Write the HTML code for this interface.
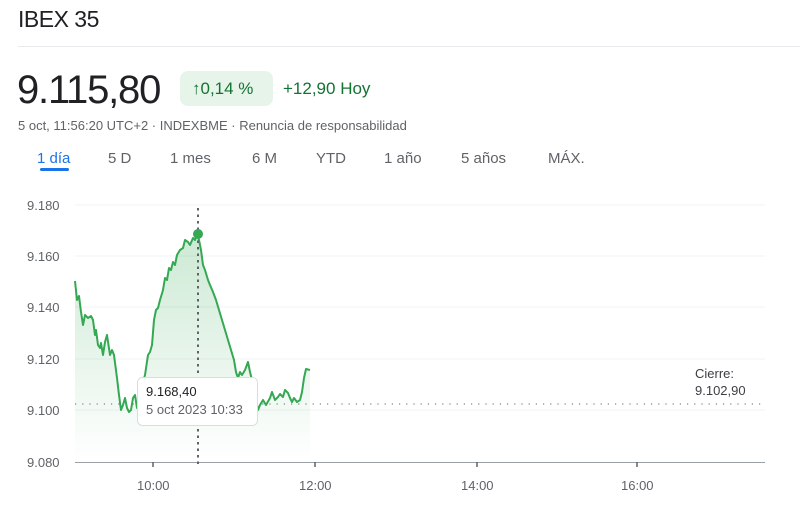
<!DOCTYPE html>
<html><head><meta charset="utf-8"><style>
*{margin:0;padding:0;box-sizing:border-box}
body{width:800px;height:509px;background:#fff;font-family:"Liberation Sans",Arial,sans-serif;position:relative;overflow:hidden;color:#202124}
.a{position:absolute;white-space:nowrap}
.tab{position:absolute;top:150px;font-size:15px;color:#5f6368}
</style></head><body>
<div class="a" style="left:18px;top:6px;font-size:23px;color:#202124;letter-spacing:-0.5px">IBEX 35</div>
<div class="a" style="left:18px;top:46px;width:782px;height:1px;background:#e8eaed"></div>
<div class="a" style="left:17px;top:68px;font-size:40px;color:#202124;letter-spacing:-1.2px">9.115,80</div>
<div class="a" style="left:180px;top:71px;width:93px;height:35px;background:#e6f4ea;border-radius:8px"></div>
<div class="a" style="left:192px;top:79px;font-size:17px;color:#137333">↑0,14 %</div>
<div class="a" style="left:283px;top:79px;font-size:17px;color:#137333">+12,90 Hoy</div>
<div class="a" style="left:18px;top:118px;font-size:13px;color:#5f6368">5 oct, 11:56:20 UTC+2 · INDEXBME · Renuncia de responsabilidad</div>
<div class="tab" style="left:37px;color:#1a73e8">1 día</div>
<div class="a" style="left:40px;top:168px;width:29px;height:3px;background:#1a73e8;border-radius:2px"></div>
<div class="tab" style="left:108px">5 D</div>
<div class="tab" style="left:170px">1 mes</div>
<div class="tab" style="left:252px">6 M</div>
<div class="tab" style="left:316px">YTD</div>
<div class="tab" style="left:384px">1 año</div>
<div class="tab" style="left:461px">5 años</div>
<div class="tab" style="left:548px">MÁX.</div>
<svg class="a" style="left:0;top:0" width="800" height="509" font-family="Liberation Sans, Arial, sans-serif">
<defs><linearGradient id="g" x1="0" y1="0" x2="0" y2="1"><stop offset="0" stop-color="#34a853" stop-opacity="0.25"/><stop offset="1" stop-color="#34a853" stop-opacity="0"/></linearGradient></defs>
<g stroke="#f1f3f4" stroke-width="1">
<line x1="75" y1="205" x2="765" y2="205"/><line x1="75" y1="256" x2="765" y2="256"/><line x1="75" y1="307" x2="765" y2="307"/><line x1="75" y1="359" x2="765" y2="359"/><line x1="75" y1="410" x2="765" y2="410"/></g>
<line x1="75" y1="462.5" x2="765" y2="462.5" stroke="#9aa0a6" stroke-width="1"/>
<g stroke="#5f6368" stroke-width="1.5"><line x1="153" y1="462" x2="153" y2="467"/><line x1="315" y1="462" x2="315" y2="467"/><line x1="477" y1="462" x2="477" y2="467"/><line x1="637" y1="462" x2="637" y2="467"/></g>
<g font-size="13" fill="#5f6368">
<text x="27" y="210">9.180</text><text x="27" y="261">9.160</text><text x="27" y="312">9.140</text><text x="27" y="364">9.120</text><text x="27" y="415">9.100</text><text x="27" y="467">9.080</text>
<text x="137" y="490">10:00</text><text x="299" y="490">12:00</text><text x="461" y="490">14:00</text><text x="621" y="490">16:00</text>
</g>
<line x1="75" y1="404" x2="765" y2="404" stroke="#80868b" stroke-width="1.2" stroke-dasharray="1.2 6"/>
<text x="695" y="378" font-size="13" fill="#3c4043">Cierre:</text><text x="695" y="395" font-size="13" fill="#3c4043">9.102,90</text>
<path d="M75,281 L77,300 79,296 81,312 83,325 85,315 88,318 91,316 93,320 95,335 96,330 98,345 100,348 101,343 103,355 105,342 107,335 110,355 112,350 114,355 117,378 119,395 121,410 123,405 125,398 127,408 129,412 131,410 133,398 135,395 137,408 140,405 142,385 145,375 148,355 150,352 152,345 154,320 156,310 158,308 160,300 163,290 165,278 167,280 169,268 171,270 173,262 175,265 177,255 180,250 183,248 185,240 188,242 190,245 193,238 195,240 197,234 199,240 201,250 203,265 205,270 208,280 210,285 213,292 216,300 219,310 222,320 225,330 228,340 231,350 234,360 236,372 238,378 240,372 242,375 245,370 248,362 250,372 252,380 255,395 258,410 260,405 263,400 266,405 270,398 272,392 275,400 278,397 280,394 283,397 285,390 288,393 290,398 292,402 294,398 297,402 300,400 302,392 304,378 306,369 310,370 L310,462 L75,462 Z" fill="url(#g)"/>
<path d="M75,281 L77,300 79,296 81,312 83,325 85,315 88,318 91,316 93,320 95,335 96,330 98,345 100,348 101,343 103,355 105,342 107,335 110,355 112,350 114,355 117,378 119,395 121,410 123,405 125,398 127,408 129,412 131,410 133,398 135,395 137,408 140,405 142,385 145,375 148,355 150,352 152,345 154,320 156,310 158,308 160,300 163,290 165,278 167,280 169,268 171,270 173,262 175,265 177,255 180,250 183,248 185,240 188,242 190,245 193,238 195,240 197,234 199,240 201,250 203,265 205,270 208,280 210,285 213,292 216,300 219,310 222,320 225,330 228,340 231,350 234,360 236,372 238,378 240,372 242,375 245,370 248,362 250,372 252,380 255,395 258,410 260,405 263,400 266,405 270,398 272,392 275,400 278,397 280,394 283,397 285,390 288,393 290,398 292,402 294,398 297,402 300,400 302,392 304,378 306,369 310,370" fill="none" stroke="#34a853" stroke-width="2" stroke-linejoin="round"/>
<line x1="198" y1="208" x2="198" y2="465" stroke="#5f6368" stroke-width="2" stroke-dasharray="2.5 4"/>
<circle cx="198" cy="234" r="5" fill="#34a853"/>
<rect x="137.5" y="377.5" width="120" height="48" rx="5" fill="#fff" stroke="#dadce0"/>
<text x="146" y="396" font-size="13" fill="#202124">9.168,40</text>
<text x="146" y="414" font-size="13" fill="#5f6368">5 oct 2023 10:33</text>
</svg>
</body></html>
